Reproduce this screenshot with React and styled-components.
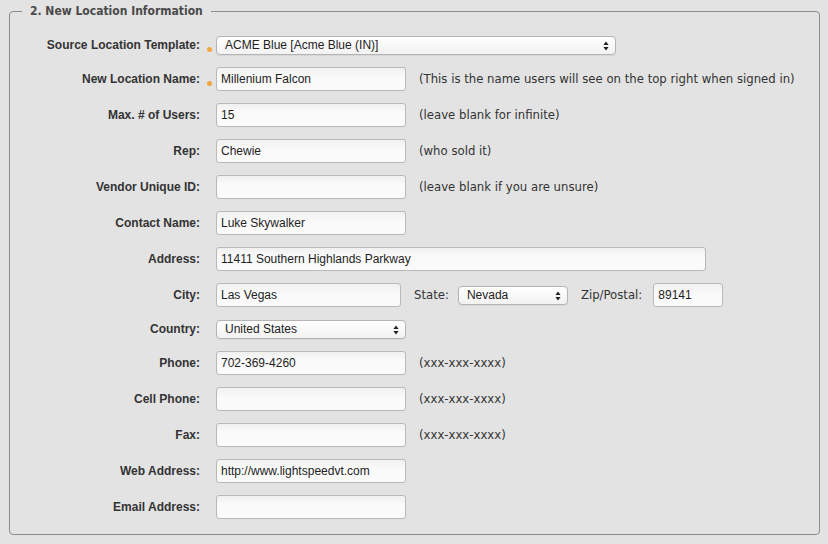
import React from 'react';
import styled, { createGlobalStyle } from 'styled-components';

const GlobalStyle = createGlobalStyle`
  html, body {
    margin: 0;
    padding: 0;
    background: #e3e3e3;
  }
  body {
    font-family: 'Liberation Sans', Arial, sans-serif;
    color: #333;
  }
`;

const Page = styled.div`
  width: 828px;
  height: 544px;
  padding: 4px 0 0 9px;
  box-sizing: border-box;
`;

const Fieldset = styled.fieldset`
  width: 811px;
  box-sizing: border-box;
  margin: 0;
  padding: 17px 0 15px 0;
  border: 1px solid #8c8c8c;
  border-radius: 4px;
  display: flex;
  flex-direction: column;
  gap: 12px;
`;

const Legend = styled.legend`
  margin-left: 12px;
  padding: 0 8px;
  font-family: 'DejaVu Sans Condensed', 'DejaVu Sans', sans-serif;
  font-weight: bold;
  font-size: 12px;
  color: #4a4a4a;
`;

const Row = styled.div`
  display: flex;
  align-items: center;
  height: ${p => (p.$select ? 20 : 24)}px;
`;

const Label = styled.label`
  width: 190px;
  text-align: right;
  font-weight: bold;
  font-size: 12px;
  color: #333;
`;

const Marker = styled.span`
  width: 16px;
  display: flex;
  justify-content: center;
  align-items: center;
  padding-left: 2px;
  padding-top: 8px;
  box-sizing: border-box;

  &::after {
    content: '';
    display: ${p => (p.$on ? 'block' : 'none')};
    width: 5px;
    height: 5px;
    border-radius: 50%;
    background: #f4a640;
  }
`;

const Input = styled.input`
  width: ${p => p.$w || 190}px;
  height: 24px;
  box-sizing: border-box;
  margin: 0 0 0 ${p => p.$ml || 0}px;
  padding: 0 4px;
  border: 1px solid #b9b9b9;
  border-radius: 3px;
  background: linear-gradient(#f0f0f0, #fafafa 40%);
  font-family: 'Liberation Sans', Arial, sans-serif;
  font-size: 12px;
  color: #222;
  outline: none;
`;

const SelectBox = styled.div`
  position: relative;
  width: ${p => p.$w}px;
  height: 19px;
  box-sizing: border-box;
  margin-left: ${p => p.$ml || 0}px;
  border: 1px solid #b4b4b4;
  border-radius: 4px;
  background: linear-gradient(#ffffff, #f2f2f2);
  box-shadow: 0 1px 0 rgba(0, 0, 0, 0.05);
  display: flex;
  align-items: center;
  padding: 0 20px 0 8px;
  font-size: 12px;
  color: #222;
`;

const Arrows = styled.svg`
  position: absolute;
  right: 6px;
  top: 4px;
`;

const Hint = styled.span`
  margin-left: ${p => p.$ml || 13}px;
  font-family: 'DejaVu Sans', 'Lucida Grande', sans-serif;
  font-size: 11.7px;
  color: #333;
`;

const Select = ({ w, ml, value }) => (
  <SelectBox $w={w} $ml={ml}>
    {value}
    <Arrows width="6" height="10" viewBox="0 0 6 10">
      <path d="M3 0.5 L5.6 4 H0.4 Z M3 9.5 L5.6 6 H0.4 Z" fill="#222" />
    </Arrows>
  </SelectBox>
);

const fields = [
  { label: 'Max. # of Users:', value: '15', hint: '(leave blank for infinite)' },
  { label: 'Rep:', value: 'Chewie', hint: '(who sold it)' },
  { label: 'Vendor Unique ID:', value: '', hint: '(leave blank if you are unsure)' },
  { label: 'Contact Name:', value: 'Luke Skywalker' },
];

const contact = [
  { label: 'Phone:', value: '702-369-4260', hint: '(xxx-xxx-xxxx)' },
  { label: 'Cell Phone:', value: '', hint: '(xxx-xxx-xxxx)' },
  { label: 'Fax:', value: '', hint: '(xxx-xxx-xxxx)' },
  { label: 'Web Address:', value: 'http://www.lightspeedvt.com' },
  { label: 'Email Address:', value: '' },
];

const TextRow = ({ label, value, hint, required }) => (
  <Row>
    <Label>{label}</Label>
    <Marker $on={required} />
    <Input defaultValue={value} />
    {hint && <Hint>{hint}</Hint>}
  </Row>
);

const App = () => (
  <Page>
    <GlobalStyle />
    <Fieldset>
      <Legend>2. New Location Information</Legend>
      <Row $select>
        <Label>Source Location Template:</Label>
        <Marker $on />
        <Select w={400} value="ACME Blue [Acme Blue (IN)]" />
      </Row>
      <TextRow
        label="New Location Name:"
        value="Millenium Falcon"
        hint="(This is the name users will see on the top right when signed in)"
        required
      />
      {fields.map(f => <TextRow key={f.label} {...f} />)}
      <Row>
        <Label>Address:</Label>
        <Marker />
        <Input $w={490} defaultValue="11411 Southern Highlands Parkway" />
      </Row>
      <Row>
        <Label>City:</Label>
        <Marker />
        <Input $w={185} defaultValue="Las Vegas" />
        <Hint $ml={13}>State:</Hint>
        <Select w={110} ml={9} value="Nevada" />
        <Hint $ml={13}>Zip/Postal:</Hint>
        <Input $w={70} $ml={11} defaultValue="89141" />
      </Row>
      <Row $select>
        <Label>Country:</Label>
        <Marker />
        <Select w={190} value="United States" />
      </Row>
      {contact.map(f => <TextRow key={f.label} {...f} />)}
    </Fieldset>
  </Page>
);

export default App;
